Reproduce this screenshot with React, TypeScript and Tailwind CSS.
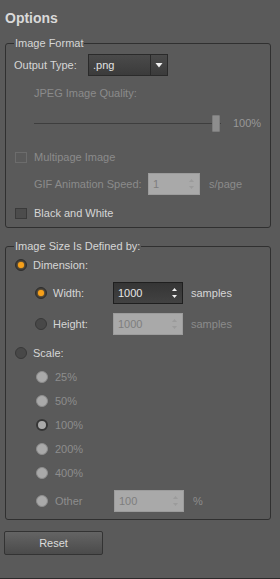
type RadioState = "on" | "off";

const Radio = ({ state, disabled }: { state: RadioState; disabled?: boolean }) => {
  if (disabled) {
    if (state === "on") {
      return (
        <span className="flex h-[12px] w-[12px] shrink-0 items-center justify-center rounded-full border-[2px] border-[#363636] bg-[#aaaaaa]" />
      );
    }
    return <span className="h-[12px] w-[12px] shrink-0 rounded-full border border-[#8c8c8c] bg-[#a9a9a9]" />;
  }
  if (state === "on") {
    return (
      <span className="flex h-[12px] w-[12px] shrink-0 items-center justify-center rounded-full border border-[#2e2e2e] bg-[#3a3a3a]">
        <span className="h-[6px] w-[6px] rounded-full bg-[#f6a01a] shadow-[0_0_2px_#f6a01a]" />
      </span>
    );
  }
  return <span className="h-[12px] w-[12px] shrink-0 rounded-full border border-[#383838] bg-[#484848]" />;
};

const Checkbox = ({ disabled }: { disabled?: boolean }) => (
  <span
    className={
      disabled
        ? "h-[11px] w-[12px] shrink-0 border border-[#6c6c6c] bg-[#5a5a5a]"
        : "h-[11px] w-[12px] shrink-0 border border-[#3a3a3a] bg-[#4c4c4c]"
    }
  />
);

const Arrows = ({ color }: { color: string }) => (
  <svg width="7" height="14" viewBox="0 0 7 14" className="shrink-0">
    <path d="M3.5 2 L6 5 L1 5 Z" fill={color} />
    <path d="M1 9 L6 9 L3.5 12 Z" fill={color} />
  </svg>
);

const Spin = ({
  value,
  width,
  disabled,
}: {
  value: string;
  width: string;
  disabled?: boolean;
}) =>
  disabled ? (
    <div
      className={`flex h-[22px] ${width} shrink-0 items-center justify-between border border-[#9c9c9c] bg-[#a9a9a9] pl-[4px] pr-[4px] text-[#7e7e7e]`}
    >
      <span>{value}</span>
      <Arrows color="#9b9b9b" />
    </div>
  ) : (
    <div
      className={`flex h-[22px] ${width} shrink-0 items-center justify-between border border-[#1f1f1f] bg-gradient-to-b from-[#353535] to-[#424242] pl-[4px] pr-[4px] text-[#e6e6e6]`}
    >
      <span>{value}</span>
      <Arrows color="#f0f0f0" />
    </div>
  );

const ScaleRow = ({ label, selected }: { label: string; selected?: boolean }) => (
  <div className="mt-[4px] flex h-[20px] items-center pl-[21px]">
    <Radio state={selected ? "on" : "off"} disabled />
    <span className="ml-[7px] text-[#8d8d8d]">{label}</span>
  </div>
);

export default function App() {
  return (
    <div className="flex h-[579px] w-[280px] flex-col overflow-hidden bg-[#5a5a5a] font-['Liberation_Sans',Arial,sans-serif] text-[11px] leading-none text-[#d6d6d6]">
      <div className="flex h-[36px] items-center pl-[5px] text-[14px] font-bold text-[#d9d9d9]">Options</div>

      <fieldset className="ml-[5px] mt-[1px] w-[266px] rounded-[3px] border border-[#303030] pb-[4px] pl-[8px]">
        <legend className="h-[13px] px-[1px] leading-[13px]">Image Format</legend>

        <div className="mt-[4px] flex h-[22px] items-center">
          <span className="w-[74px]">Output Type:</span>
          <div className="flex h-[22px] w-[80px] items-stretch border border-[#2a2a2a] bg-gradient-to-b from-[#4a4a4a] to-[#3b3b3b]">
            <span className="flex flex-1 items-center pl-[4px] text-[#e2e2e2]">.png</span>
            <span className="flex w-[17px] items-center justify-center border-l border-[#2a2a2a]">
              <svg width="8" height="6" viewBox="0 0 8 6">
                <path d="M0.5 1 L7.5 1 L4 5.5 Z" fill="#f2f2f2" />
              </svg>
            </span>
          </div>
        </div>

        <div className="mt-[7px] flex h-[20px] items-center pl-[20px] text-[#8b8b8b]">JPEG Image Quality:</div>

        <div className="mt-[10px] flex h-[20px] items-center pl-[20px]">
          <div className="relative h-[20px] w-[187px]">
            <div className="absolute left-0 right-0 top-[10px] h-[1px] bg-[#3e3e3e]" />
            <div className="absolute right-[1px] top-[2px] h-[17px] w-[8px] rounded-[1px] border border-[#7c7c7c] bg-[#8d8d8d]" />
          </div>
          <span className="ml-[12px] text-[#989898]">100%</span>
        </div>

        <div className="mt-[14px] flex h-[20px] items-center pl-[1px]">
          <Checkbox disabled />
          <span className="ml-[7px] text-[#8b8b8b]">Multipage Image</span>
        </div>

        <div className="mt-[6px] flex h-[22px] items-center pl-[20px] text-[#8b8b8b]">
          <span className="w-[114px]">GIF Animation Speed:</span>
          <Spin value="1" width="w-[52px]" disabled />
          <span className="ml-[9px]">s/page</span>
        </div>

        <div className="mt-[8px] flex h-[20px] items-center pl-[1px]">
          <Checkbox />
          <span className="ml-[7px]">Black and White</span>
        </div>
      </fieldset>

      <fieldset className="ml-[5px] mt-[12px] w-[266px] rounded-[3px] border border-[#303030] pb-[7px] pl-[9px]">
        <legend className="ml-[-1px] h-[13px] px-[1px] leading-[13px]">Image Size Is Defined by:</legend>

        <div className="mt-[2px] flex h-[20px] items-center">
          <Radio state="on" />
          <span className="ml-[6px]">Dimension:</span>
        </div>

        <div className="mt-[7px] flex h-[22px] items-center pl-[20px]">
          <Radio state="on" />
          <span className="ml-[6px] w-[60px]">Width:</span>
          <Spin value="1000" width="w-[70px]" />
          <span className="ml-[8px]">samples</span>
        </div>

        <div className="mt-[9px] flex h-[22px] items-center pl-[20px]">
          <Radio state="off" />
          <span className="ml-[6px] w-[60px]">Height:</span>
          <Spin value="1000" width="w-[70px]" disabled />
          <span className="ml-[8px] text-[#8b8b8b]">samples</span>
        </div>

        <div className="mt-[8px] flex h-[20px] items-center">
          <Radio state="off" />
          <span className="ml-[6px]">Scale:</span>
        </div>

        <ScaleRow label="25%" />
        <ScaleRow label="50%" />
        <ScaleRow label="100%" selected />
        <ScaleRow label="200%" />
        <ScaleRow label="400%" />

        <div className="mt-[7px] flex h-[22px] items-center pl-[21px]">
          <Radio state="off" disabled />
          <span className="ml-[7px] w-[59px] text-[#8d8d8d]">Other</span>
          <Spin value="100" width="w-[70px]" disabled />
          <span className="ml-[9px] text-[#8d8d8d]">%</span>
        </div>
      </fieldset>

      <button className="ml-[4px] mt-[11px] flex h-[24px] w-[99px] items-center justify-center rounded-[2px] border border-[#333333] bg-gradient-to-b from-[#646464] to-[#4b4b4b] text-[#dcdcdc]">
        Reset
      </button>

      <div className="mt-auto h-[1px] bg-[#2b2b2b]" />
    </div>
  );
}
